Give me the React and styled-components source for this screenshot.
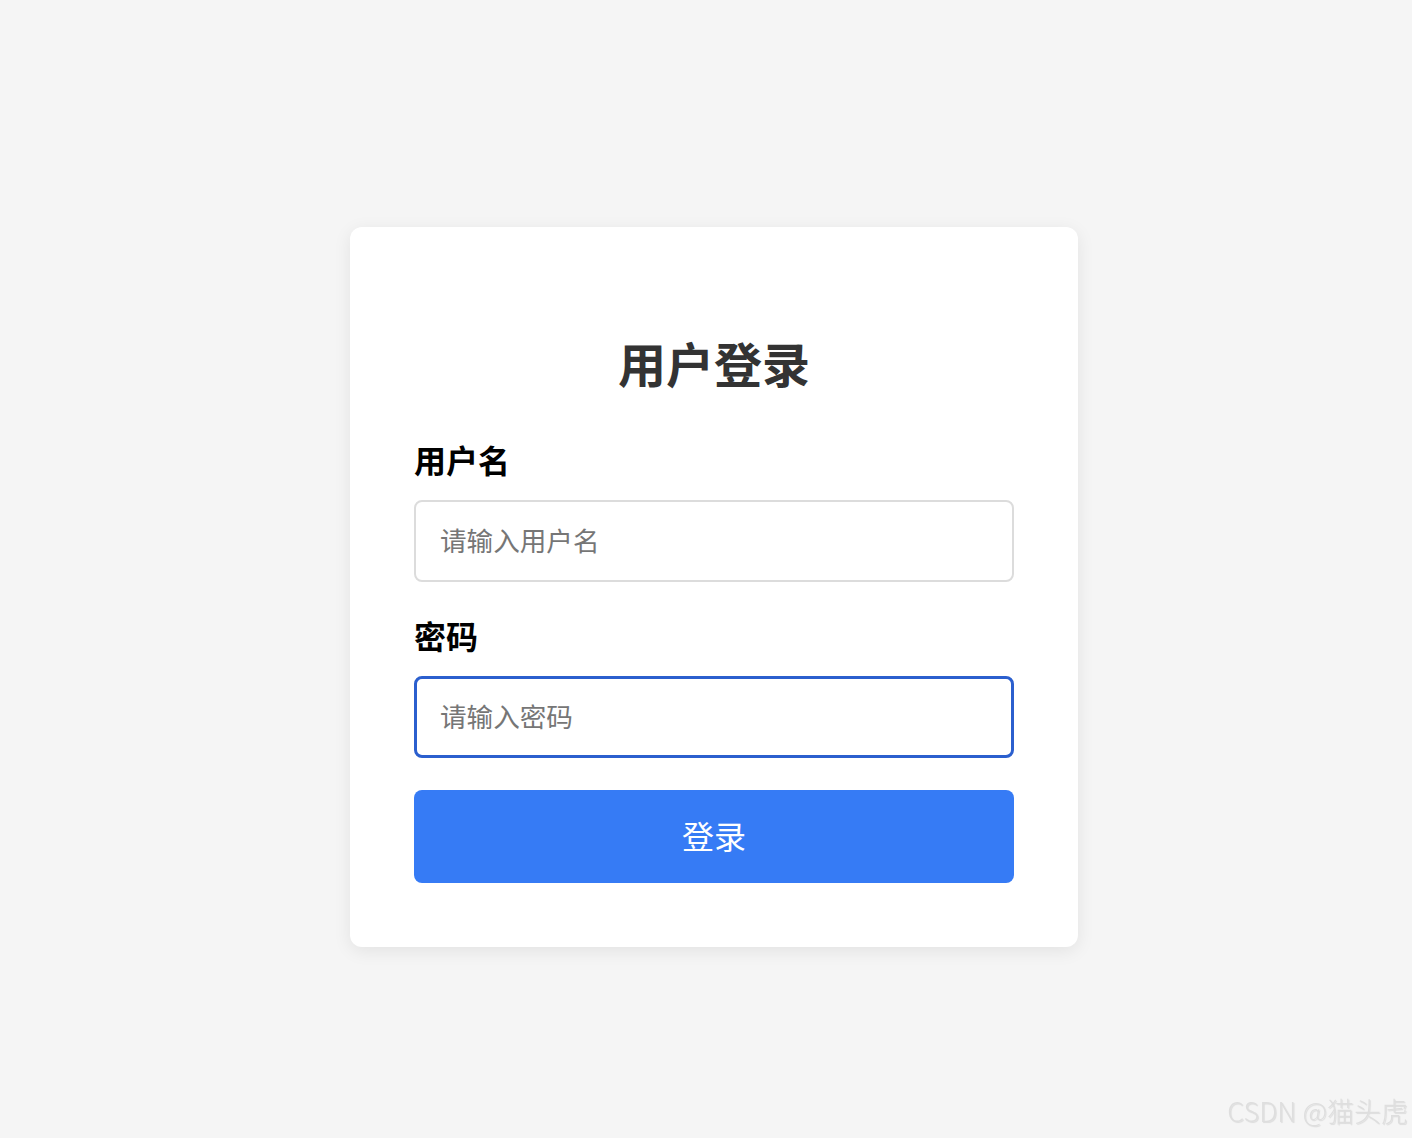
import React from 'react'
import styled, {createGlobalStyle} from 'styled-components'

const FONT = `"Noto Sans", "Noto Sans CJK SC", sans-serif`

const GlobalStyle = createGlobalStyle`
  html, body {
    margin: 0;
    padding: 0;
    background: #f5f5f5;
    font-family: ${FONT};
  }
  * {
    box-sizing: border-box;
  }
`

const Page = styled.div`
  display: flex;
  justify-content: center;
  align-items: flex-start;
  min-height: 1138px;
  padding: 227px 0 0 16px;
  background: #f5f5f5;
`

const Card = styled.form`
  display: flex;
  flex-direction: column;
  width: 728px;
  padding: 64px;
  background: #fff;
  border-radius: 12px;
  box-shadow: 0 4px 18px rgba(0, 0, 0, 0.08);
`

const Title = styled.h2`
  margin: 45px 0 48px;
  font-size: 48px;
  line-height: 1.2;
  font-weight: 700;
  color: #333;
  text-align: center;
`

const Field = styled.div`
  display: flex;
  flex-direction: column;
  margin-bottom: ${p => p.last ? '32px' : '36px'};
`

const Label = styled.label`
  margin-bottom: 20px;
  font-size: 32px;
  line-height: 1.2;
  font-weight: 700;
  color: #000;
`

const Input = styled.input`
  width: 100%;
  height: 82px;
  padding: 0 ${p => p.focused ? '23px' : '24px'};
  border: ${p => p.focused ? '3px solid #2b5fce' : '2px solid #dcdcdc'};
  border-radius: 8px;
  font-family: ${FONT};
  font-size: 26.6px;
  color: #333;
  caret-color: #000;
  background: #fff;
  outline: none;

  &::placeholder {
    color: #767676;
  }
`

const Button = styled.button`
  height: 93px;
  padding: 0 0 4px;
  border: none;
  border-radius: 8px;
  background: #367bf5;
  color: #fff;
  font-family: ${FONT};
  font-size: 32px;
  cursor: pointer;
`

const Watermark = styled.div`
  position: fixed;
  right: 4px;
  bottom: 8px;
  font-family: "Noto Sans CJK SC", sans-serif;
  font-size: 27px;
  font-weight: 300;
  color: #dedede;
  text-shadow: 1px 1px 1px rgba(0, 0, 0, 0.1);
`

const App = () =>
  <>
    <GlobalStyle />
    <Page>
      <Card onSubmit={e => e.preventDefault()}>
        <Title>用户登录</Title>
        <Field>
          <Label htmlFor="username">用户名</Label>
          <Input id="username" type="text" placeholder="请输入用户名" />
        </Field>
        <Field last>
          <Label htmlFor="password">密码</Label>
          <Input id="password" type="password" placeholder="请输入密码" focused autoFocus />
        </Field>
        <Button type="submit">登录</Button>
      </Card>
    </Page>
    <Watermark>CSDN @猫头虎</Watermark>
  </>

export default App
